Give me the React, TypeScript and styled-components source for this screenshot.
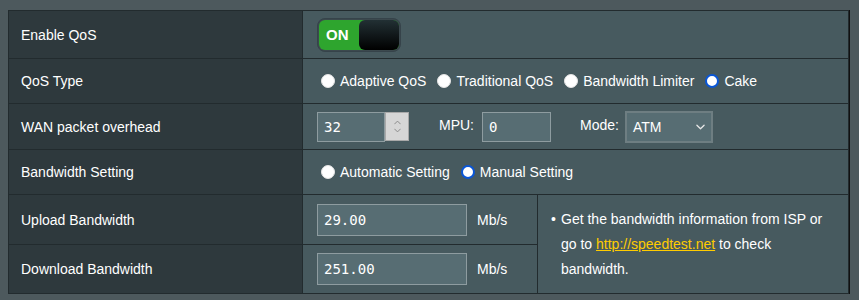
import React from "react";
import styled, { createGlobalStyle } from "styled-components";

const Global = createGlobalStyle`
  html, body { margin: 0; padding: 0; background: #4d595d; }
  body {
    font-family: "Liberation Sans", Arial, Helvetica, sans-serif;
    font-size: 14px;
    color: #ffffff;
  }
  * { box-sizing: border-box; }
`;

const Page = styled.div`
  padding: 10px 10px 0 8px;
`;

const FormTable = styled.div`
  width: 841px;
  display: grid;
  grid-template-columns: 293px 234px 1fr;
  grid-template-rows: 47px 44px 45px 44px 49px 48px;
  gap: 1px;
  padding: 1px;
  background: #222b2e;
  box-shadow: 1px 0 0 #111;
`;

const Label = styled.div`
  display: flex;
  align-items: center;
  padding-left: 12px;
  background: #2e393d;
  color: #ffffff;
`;

const Cell = styled.div<{ $span?: boolean }>`
  display: flex;
  align-items: center;
  padding-left: 14px;
  background: #475a5f;
  grid-column: ${(p) => (p.$span ? "2 / 4" : "2 / 3")};
`;

const NoteCell = styled.div`
  grid-column: 3 / 4;
  grid-row: 5 / 7;
  display: flex;
  align-items: center;
  padding: 0 10px 0 13px;
  background: #475a5f;
`;

/* toggle */
const ToggleFrame = styled.div`
  width: 84px;
  height: 34px;
  padding: 1px;
  border: 1px solid #36434a;
  border-radius: 8px;
  background: #3c494e;
  display: flex;
`;

const ToggleTrack = styled.div`
  flex: 1;
  display: flex;
  align-items: center;
  justify-content: space-between;
  border-radius: 6px;
  background: #2ea52e;
`;

const ToggleText = styled.span`
  font-weight: bold;
  font-size: 15px;
  padding-left: 7px;
  color: #ffffff;
`;

const Knob = styled.div`
  width: 40px;
  height: 100%;
  border-radius: 6px;
  background: linear-gradient(#223034, #000000);
`;

/* radios */
const RadioOption = styled.label`
  display: inline-flex;
  align-items: center;
  margin-right: 7px;
  color: #ffffff;
`;

const RadioDot = styled.span<{ $checked?: boolean }>`
  width: 14px;
  height: 14px;
  margin: 0 5px 0 4px;
  border-radius: 50%;
  background: #ffffff;
  border: ${(p) => (p.$checked ? "2.5px solid #0a56d6" : "1px solid #e4e4e4")};
  box-shadow: ${(p) => (p.$checked ? "inset 0 0 0 2px #ffffff" : "none")};
`;

/* inputs */
const TextInput = styled.div<{ $w: number }>`
  width: ${(p) => p.$w}px;
  height: 30px;
  display: flex;
  align-items: center;
  padding-left: 6px;
  background: #576d73;
  border: 1px solid #8e9ca0;
  font-family: "DejaVu Sans Mono", "Liberation Mono", monospace;
  font-size: 14px;
  color: #ffffff;
`;

const TallInput = styled(TextInput)`
  height: 32px;
`;

const Spinner = styled.div`
  width: 24px;
  height: 29px;
  align-self: center;
  display: flex;
  flex-direction: column;
  align-items: center;
  justify-content: center;
  gap: 3px;
  background: #d6d6d6;
  border: 1px solid #a9a9a9;
  margin-top: -1px;
`;

const FieldLabel = styled.span<{ $ml: number; $mr: number }>`
  margin-left: ${(p) => p.$ml}px;
  margin-right: ${(p) => p.$mr}px;
  color: #ffffff;
  align-self: center;
  margin-top: -4px;
`;

const Select = styled.div`
  width: 88px;
  height: 32px;
  display: flex;
  align-items: center;
  justify-content: space-between;
  padding: 0 6px 0 6px;
  background: #576d73;
  border: 2px solid #6e7e82;
  color: #ffffff;
`;

const Unit = styled.span`
  margin-left: 10px;
  color: #ffffff;
`;

/* note */
const NoteItem = styled.div`
  display: flex;
  line-height: 25px;
  color: #ffffff;
`;

const Bullet = styled.span`
  width: 10px;
  flex: none;
`;

const NoteText = styled.span`
  flex: 1;
`;

const Link = styled.a`
  color: #ffcc00;
  text-decoration: underline;
`;

const Chevron = ({ up, color, w, h }: { up?: boolean; color: string; w: number; h: number }) => (
  <svg width={w} height={h} viewBox="0 0 10 6" fill="none">
    <path
      d={up ? "M1 5 L5 1 L9 5" : "M1 1 L5 5 L9 1"}
      stroke={color}
      strokeWidth="1.4"
      strokeLinecap="round"
      strokeLinejoin="round"
    />
  </svg>
);

const Radio = ({ label, checked }: { label: string; checked?: boolean }) => (
  <RadioOption>
    <RadioDot $checked={checked} />
    {label}
  </RadioOption>
);

export default function App() {
  return (
    <>
      <Global />
      <Page>
        <FormTable>
          <Label>Enable QoS</Label>
          <Cell $span>
            <ToggleFrame>
              <ToggleTrack>
                <ToggleText>ON</ToggleText>
                <Knob />
              </ToggleTrack>
            </ToggleFrame>
          </Cell>

          <Label>QoS Type</Label>
          <Cell $span>
            <Radio label="Adaptive QoS" />
            <Radio label="Traditional QoS" />
            <Radio label="Bandwidth Limiter" />
            <Radio label="Cake" checked />
          </Cell>

          <Label>WAN packet overhead</Label>
          <Cell $span>
            <TextInput $w={68}>32</TextInput>
            <Spinner>
              <Chevron up color="#8a8a8a" w={7} h={5} />
              <Chevron color="#8a8a8a" w={7} h={5} />
            </Spinner>
            <FieldLabel $ml={30} $mr={8}>MPU:</FieldLabel>
            <TextInput $w={69}>0</TextInput>
            <FieldLabel $ml={29} $mr={6}>Mode:</FieldLabel>
            <Select>
              <span>ATM</span>
              <Chevron color="#e8e8e8" w={9} h={6} />
            </Select>
          </Cell>

          <Label>Bandwidth Setting</Label>
          <Cell $span>
            <Radio label="Automatic Setting" />
            <Radio label="Manual Setting" checked />
          </Cell>

          <Label>Upload Bandwidth</Label>
          <Cell>
            <TallInput $w={150}>29.00</TallInput>
            <Unit>Mb/s</Unit>
          </Cell>
          <NoteCell>
            <NoteItem>
              <Bullet>•</Bullet>
              <NoteText>
                Get the bandwidth information from ISP or go to{" "}
                <Link href="#">http://speedtest.net</Link> to check bandwidth.
              </NoteText>
            </NoteItem>
          </NoteCell>

          <Label>Download Bandwidth</Label>
          <Cell>
            <TallInput $w={150}>251.00</TallInput>
            <Unit>Mb/s</Unit>
          </Cell>
        </FormTable>
      </Page>
    </>
  );
}
